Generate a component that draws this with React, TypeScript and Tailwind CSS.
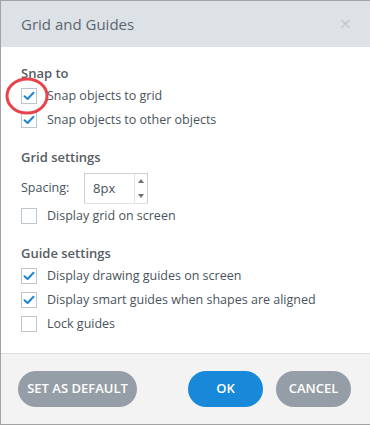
import React from "react";

const font = { fontFamily: '"Open Sans", "Noto Sans", Arial, sans-serif' };

function Check({ checked }: { checked: boolean }) {
  return (
    <div className="w-[16px] h-[16px] border border-[#bcc4cc] bg-white flex items-center justify-center shrink-0">
      {checked && (
        <svg width="12" height="10" viewBox="0 0 12 10">
          <path d="M1.5 5.2 L4.6 8 L10.5 1.8" fill="none" stroke="#1e86d6" strokeWidth="2" strokeLinecap="round" strokeLinejoin="round" />
        </svg>
      )}
    </div>
  );
}

function Row({ checked, label }: { checked: boolean; label: string }) {
  return (
    <div className="h-[24px] flex items-center gap-[10px]">
      <Check checked={checked} />
      <span className="text-[12.5px] text-[#4a535c] leading-none">{label}</span>
    </div>
  );
}

function Heading({ children, className = "" }: { children: React.ReactNode; className?: string }) {
  return (
    <div className={"h-[21px] flex items-center text-[13px] font-semibold text-[#555c63] " + className}>{children}</div>
  );
}

export default function App() {
  return (
    <div className="w-[370px] h-[425px] relative bg-white border-l border-t border-b border-[#a3a3a3] flex flex-col" style={font}>
      <div className="h-[46px] shrink-0 bg-[#dde2e6] flex items-center justify-between pl-[20px] pr-[19px]">
        <span className="text-[15px] text-[#5b6670]">Grid and Guides</span>
        <span className="text-[20px] text-[#c3c8cc] leading-none">×</span>
      </div>
      <div className="flex-1 px-[20px] pt-[16px]">
        <Heading>Snap to</Heading>
        <Row checked label="Snap objects to grid" />
        <Row checked label="Snap objects to other objects" />
        <Heading className="mt-[15px]">Grid settings</Heading>
        <div className="mt-[5px] h-[31px] flex items-center">
          <span className="text-[12.5px] text-[#4a535c] w-[63px]">Spacing:</span>
          <div className="w-[64px] h-[31px] border border-[#cdd1d5] border-b-[#dfe2e5] flex">
            <div className="flex-1 flex items-center pl-[8px] text-[13px] text-[#4a535c]">8px</div>
            <div className="w-[13px] border-l border-[#e2e5e8] flex flex-col items-center justify-between py-[5px]">
              <svg width="6" height="4" viewBox="0 0 6 4"><path d="M0 4 L3 0 L6 4 Z" fill="#6b7379" /></svg>
              <svg width="6" height="4" viewBox="0 0 6 4"><path d="M0 0 L3 4 L6 0 Z" fill="#6b7379" /></svg>
            </div>
          </div>
        </div>
        <Row checked={false} label="Display grid on screen" />
        <Heading className="mt-[15px]">Guide settings</Heading>
        <Row checked label="Display drawing guides on screen" />
        <Row checked label="Display smart guides when shapes are aligned" />
        <Row checked={false} label="Lock guides" />
      </div>
      <div className="h-[71px] shrink-0 border-t border-[#dcdcdc] bg-[#f3f3f3] flex items-center pl-[17px] pr-[19px]">
        <button className="h-[36px] w-[119px] rounded-full bg-[#959ea6] text-white text-[13px] font-semibold">SET AS DEFAULT</button>
        <div className="flex-1" />
        <button className="h-[36px] w-[75px] rounded-full bg-[#1789d8] text-white text-[13px] font-semibold">OK</button>
        <button className="ml-[13px] h-[36px] w-[75px] rounded-full bg-[#959ea6] text-white text-[13px] font-semibold">CANCEL</button>
      </div>
      <svg className="absolute left-[4px] top-[76px] pointer-events-none" width="44" height="38" viewBox="0 0 44 38">
        <ellipse cx="22" cy="19" rx="20" ry="17" fill="none" stroke="#e8434b" strokeWidth="3" />
      </svg>
    </div>
  );
}
